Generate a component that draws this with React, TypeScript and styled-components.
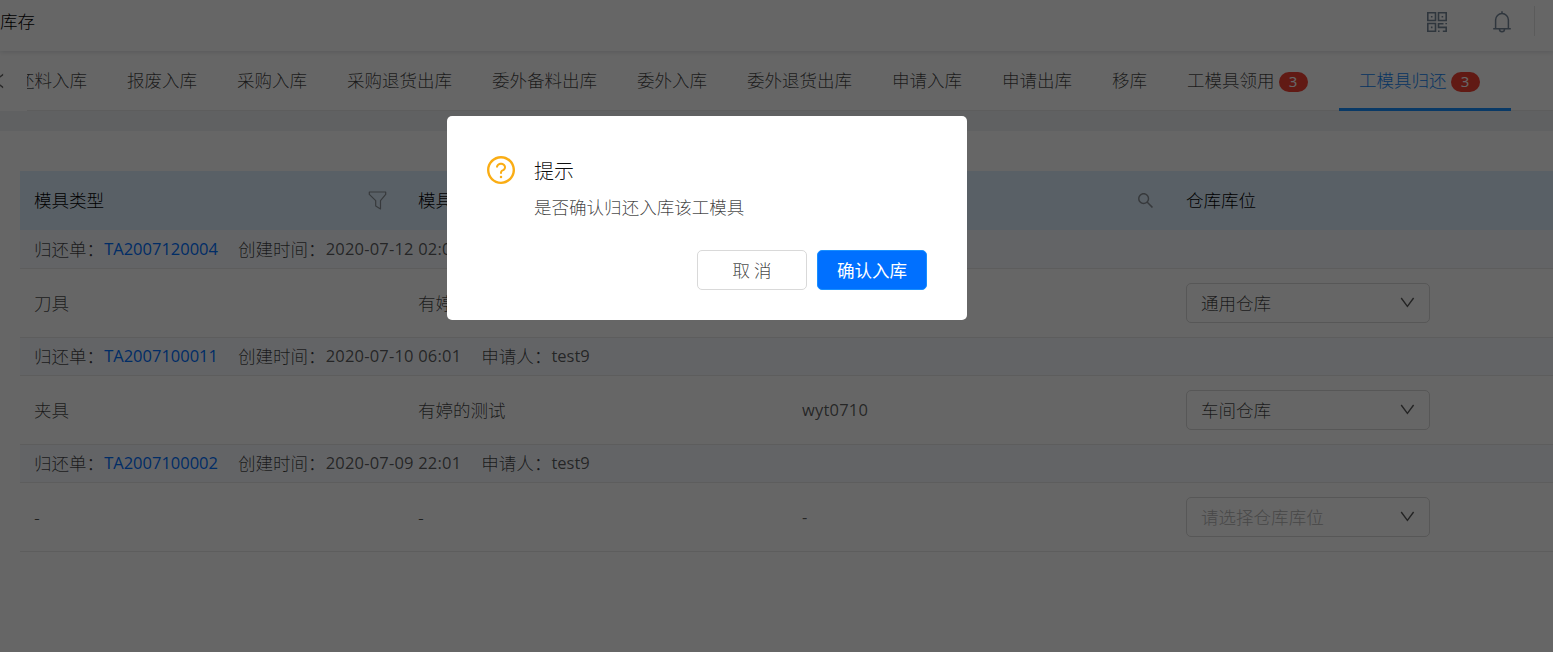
import React from 'react';
import styled, { createGlobalStyle, css } from 'styled-components';
import {
  AiOutlineLeft,
  AiOutlineQuestionCircle,
  AiOutlineSearch,
} from 'react-icons/ai';

const GlobalStyle = createGlobalStyle`
  * { box-sizing: border-box; }
  html, body { margin: 0; overflow: hidden; }
  body {
    font-family: "Noto Sans CJK SC", sans-serif;
    font-size: 17.55px;
    font-weight: 300;
    color: rgba(0, 0, 0, 0.75);
    background: #fff;
  }
`;

const Page = styled.div`
  display: flex;
  flex-direction: column;
  width: 100vw;
  height: 100vh;
  overflow: hidden;
  background: #fff;
`;

const Header = styled.header`
  position: relative;
  flex: none;
  display: flex;
  align-items: center;
  height: 51px;
  padding-bottom: 9px;
  box-shadow: 0 1px 5px rgba(0, 21, 41, 0.14);
`;

const Crumb = styled.span`
  flex: 1;
  color: #000;
  line-height: 26px;
`;

const HeaderIcon = styled.span`
  display: flex;
  align-items: center;
  justify-content: center;
  width: 65px;
  padding-top: 1px;
  color: #76879a;
  svg { display: block; }
`;

const HeaderDivider = styled.span`
  width: 1px;
  height: 30px;
  margin-right: 18px;
  background: #e4e4e4;
`;

const TabNav = styled.nav`
  flex: none;
  display: flex;
  height: 60px;
`;

const TabPrev = styled.div`
  flex: none;
  display: flex;
  align-items: center;
  width: 27px;
  overflow: hidden;
  svg { flex: none; margin-left: -11px; color: rgba(0, 0, 0, 0.6); }
`;

const TabScroller = styled.div`
  flex: 1;
  display: flex;
  min-width: 0;
  overflow: hidden;
  box-shadow: inset 0 -1px 0 #e8e8e8;
`;

const TabStrip = styled.div`
  flex: none;
  display: flex;
  height: 60px;
  margin-left: -30px;
`;

const Tab = styled.div<{ $active?: boolean; $wide?: boolean }>`
  flex: none;
  display: flex;
  align-items: center;
  height: 60px;
  padding: 0 20px 4px;
  white-space: nowrap;
  font-size: 17.5px;
  width: ${p => (p.$wide ? '172px' : 'auto')};
  ${p => p.$active && css`
    color: #0f84f5;
    box-shadow: inset 0 -3px 0 #1890ff;
  `}
`;

const Badge = styled.span`
  display: flex;
  align-items: center;
  justify-content: center;
  width: 29px;
  height: 20px;
  margin: 6px 0 0 4px;
  padding-bottom: 2px;
  border-radius: 10px;
  background: #f24134;
  color: #fff;
  font: 400 15px/18px "Noto Sans", sans-serif;
`;

const Band = styled.div`
  flex: none;
  height: 20px;
  background: #f0f2f5;
`;

const Table = styled.section`
  margin: 40px 0 0 20px;
  white-space: nowrap;
`;

const HeadRow = styled.div`
  display: grid;
  grid-template-columns: 384px 384px 384px 1fr;
  height: 59px;
  background: #def0ff;
  color: #000;
`;

const HeadCell = styled.div`
  display: flex;
  align-items: center;
  justify-content: space-between;
  padding: 0 17px 2px 14px;
  svg { margin-top: 1px; color: #8a9096; }
`;

const GroupRow = styled.div<{ $first: boolean }>`
  display: flex;
  align-items: center;
  gap: 20px;
  height: ${p => (p.$first ? 39 : 38)}px;
  padding: 0 0 ${p => (p.$first ? 0 : 1)}px 14px;
  border-bottom: 1px solid #e8e8e8;
  background: #f7faff;
`;

const Field = styled.span`
  display: flex;
  align-items: center;
  line-height: 26px;
`;

const Latin = styled.span<{ $link?: boolean; $spacing?: number }>`
  font-family: "Open Sans", sans-serif;
  font-size: 16.5px;
  font-weight: 400;
  letter-spacing: ${p => p.$spacing ?? 0}px;
  color: ${p => (p.$link ? '#0070ff' : 'rgba(0, 0, 0, 0.65)')};
`;

const BodyRow = styled.div`
  display: grid;
  grid-template-columns: 384px 384px 384px 1fr;
  height: 69px;
  border-bottom: 1px solid #e8e8e8;
`;

const Cell = styled.div`
  display: flex;
  align-items: center;
  padding: 0 0 1px 14px;
`;

const Select = styled.div<{ $empty: boolean }>`
  display: flex;
  align-items: center;
  justify-content: space-between;
  width: 244px;
  height: 40px;
  margin-top: 1px;
  padding: 0 14px 1px;
  border: 1px solid #d9d9d9;
  border-radius: 5px;
  color: ${p => (p.$empty ? '#b4b4b4' : 'inherit')};
  svg { color: rgba(0, 0, 0, 0.65); }
`;

const Mask = styled.div`
  position: absolute;
  inset: 0;
  background: rgba(0, 0, 0, 0.6);
`;

const Dialog = styled.div`
  position: absolute;
  top: 116px;
  left: 447px;
  display: flex;
  flex-direction: column;
  justify-content: space-between;
  width: 520px;
  height: 204px;
  padding: 38px 40px 30px 38px;
  border-radius: 5px;
  background: #fff;
`;

const Message = styled.div`
  display: grid;
  grid-template-columns: 32px 1fr;
  column-gap: 17px;
  svg { color: #faad14; }
`;

const Title = styled.div`
  margin-top: 2px;
  color: rgba(0, 0, 0, 0.95);
  font-size: 20px;
  line-height: 30px;
`;

const Description = styled.div`
  grid-column: 2;
  margin-top: 8px;
  line-height: 26px;
`;

const Actions = styled.div`
  display: flex;
  justify-content: flex-end;
  gap: 10px;
`;

const Button = styled.button<{ $primary?: boolean }>`
  width: 110px;
  height: 40px;
  padding: 0;
  border: 1px solid ${p => (p.$primary ? '#1890ff' : '#d9d9d9')};
  border-radius: 5px;
  background: ${p => (p.$primary ? '#0070ff' : '#fff')};
  color: ${p => (p.$primary ? '#fff' : 'rgba(0, 0, 0, 0.75)')};
  font: inherit;
  font-weight: ${p => (p.$primary ? 400 : 300)};
  line-height: 38px;
`;

const QrIcon = () => (
  <svg width="20" height="20" viewBox="0 0 20 20" fill="none" stroke="currentColor" strokeWidth="1.6">
    <path d="M.8.8h7.7v7.7H.8zM11.5.8h7.7v7.7h-7.7zM.8 11.5h7.7v7.7H.8z" />
    <path d="M19.2 11v1.2M16.5 11.8h-5v3.6h7.7v3.8h-3.4M11 19.2h1.6" />
    <path d="M3.9 4.7h1.6M14.6 4.7h1.6M3.9 15.4h1.6" />
  </svg>
);

const BellIcon = () => (
  <svg width="18" height="22" viewBox="0 0 18 22" fill="none" stroke="currentColor" strokeWidth="1.5">
    <path d="M9 .3v2.2M2.6 17.3V9a6.4 6.4 0 0 1 12.8 0v8.3M.2 17.8h17.6M6.4 18c.2 3.8 5 3.8 5.2 0" />
  </svg>
);

const FilterIcon = () => (
  <svg width="19" height="19" viewBox="0 0 19 19" fill="none" stroke="currentColor" strokeWidth="1.2" strokeLinejoin="round">
    <path d="M1.3 1h16.4v2.4l-5.2 6.2v8.3l-4.8-2.9V9.6L1.3 3.4z" />
  </svg>
);

const DownIcon = () => (
  <svg width="15" height="12" viewBox="0 0 15 12" fill="none" stroke="currentColor" strokeWidth="1.4">
    <path d="M1.2 1l6.2 8.4L13.6 1" />
  </svg>
);

const tabs: { label: string; count?: number; active?: boolean }[] = [
  { label: '还料入库' },
  { label: '报废入库' },
  { label: '采购入库' },
  { label: '采购退货出库' },
  { label: '委外备料出库' },
  { label: '委外入库' },
  { label: '委外退货出库' },
  { label: '申请入库' },
  { label: '申请出库' },
  { label: '移库' },
  { label: '工模具领用', count: 3 },
  { label: '工模具归还', count: 3, active: true },
];

const groups = [
  { id: 'TA2007120004', time: '2020-07-12 02:01', user: 'test9', type: '刀具', name: '有婷的测试', code: 'wyt0712', store: '通用仓库' },
  { id: 'TA2007100011', time: '2020-07-10 06:01', user: 'test9', type: '夹具', name: '有婷的测试', code: 'wyt0710', store: '车间仓库' },
  { id: 'TA2007100002', time: '2020-07-09 22:01', user: 'test9', type: '-', name: '-', code: '-', store: '' },
];

export default function App() {
  return (
    <Page>
      <GlobalStyle />
      <Header>
        <Crumb>库存</Crumb>
        <HeaderIcon><QrIcon /></HeaderIcon>
        <HeaderIcon><BellIcon /></HeaderIcon>
        <HeaderDivider />
      </Header>
      <TabNav>
        <TabPrev><AiOutlineLeft size={20} /></TabPrev>
        <TabScroller>
          <TabStrip>
            {tabs.map(t => (
              <Tab key={t.label} $active={t.active} $wide={!!t.count}>
                {t.label}
                {t.count && <Badge>{t.count}</Badge>}
              </Tab>
            ))}
          </TabStrip>
        </TabScroller>
      </TabNav>
      <Band />
      <Table>
        <HeadRow>
          <HeadCell>模具类型<FilterIcon /></HeadCell>
          <HeadCell>模具名称</HeadCell>
          <HeadCell>模具编号<AiOutlineSearch size={19} /></HeadCell>
          <HeadCell>仓库库位</HeadCell>
        </HeadRow>
        {groups.map((g, i) => (
          <React.Fragment key={g.id}>
            <GroupRow $first={i === 0}>
              <Field>归还单：<Latin $link>{g.id}</Latin></Field>
              <Field>创建时间：<Latin $spacing={0.2}>{g.time}</Latin></Field>
              <Field>申请人：<Latin>{g.user}</Latin></Field>
            </GroupRow>
            <BodyRow>
              <Cell>{g.type}</Cell>
              <Cell>{g.name}</Cell>
              <Cell><Latin $spacing={0.2}>{g.code}</Latin></Cell>
              <Cell>
                <Select $empty={!g.store}>
                  {g.store || '请选择仓库库位'}
                  <DownIcon />
                </Select>
              </Cell>
            </BodyRow>
          </React.Fragment>
        ))}
      </Table>
      <Mask />
      <Dialog role="dialog">
        <Message>
          <AiOutlineQuestionCircle size={32} />
          <Title>提示</Title>
          <Description>是否确认归还入库该工模具</Description>
        </Message>
        <Actions>
          <Button>取 消</Button>
          <Button $primary>确认入库</Button>
        </Actions>
      </Dialog>
    </Page>
  );
}
